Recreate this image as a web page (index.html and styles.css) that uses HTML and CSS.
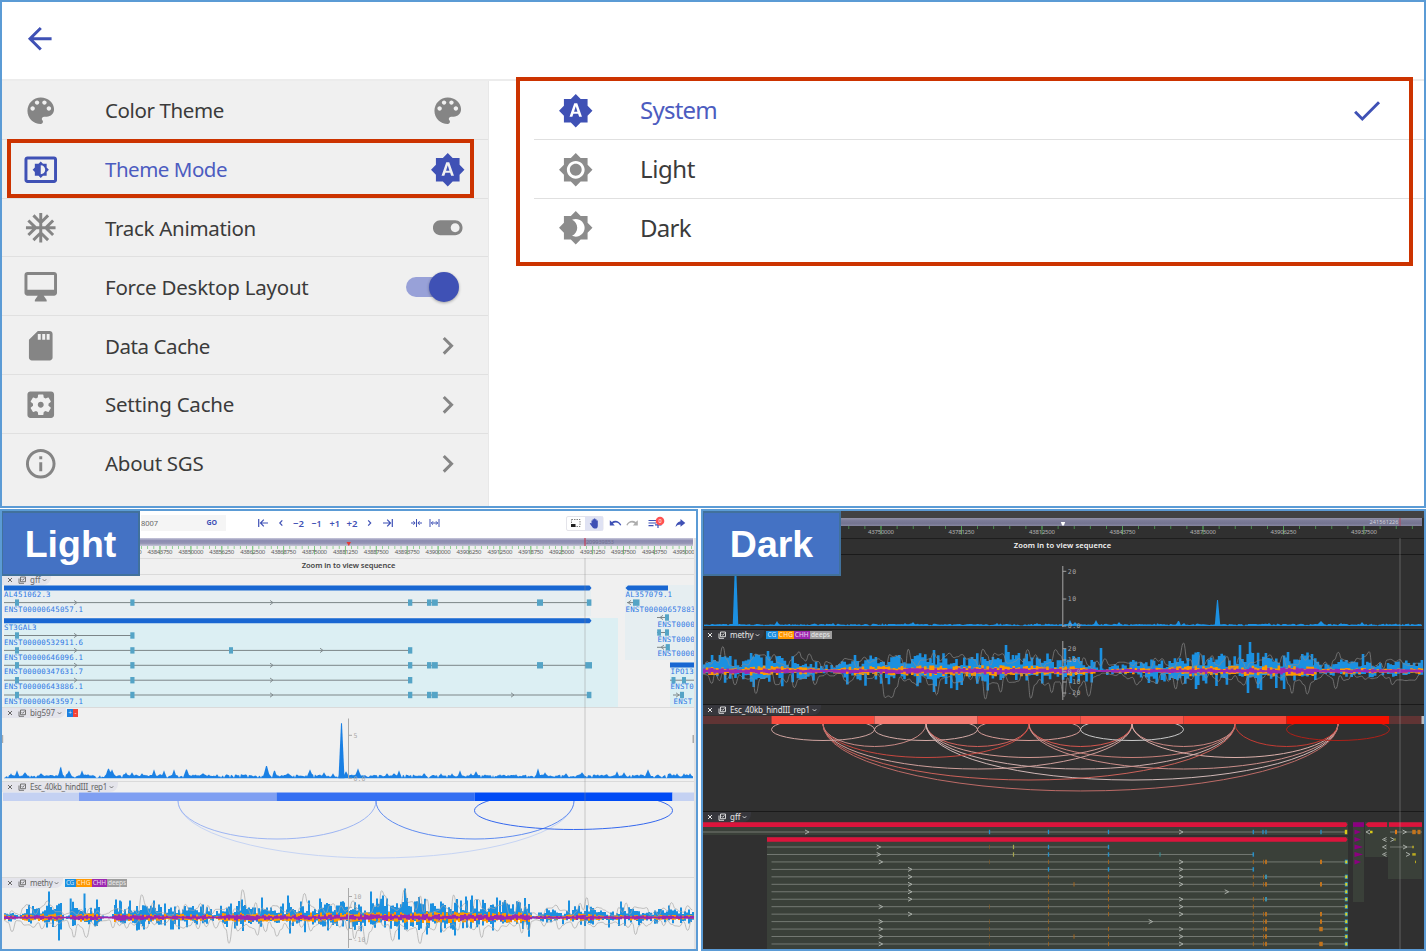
FILE: index.html
```html
<!DOCTYPE html>
<html lang="en">
<head>
<meta charset="utf-8">
<title>SGS theme settings</title>
<link rel="stylesheet" href="styles.css">
</head>
<body>
<svg class="defs" aria-hidden="true">
  <symbol id="i-back" viewBox="0 0 24 24"><path d="M20 11H7.83l5.59-5.59L12 4l-8 8 8 8 1.41-1.41L7.83 13H20v-2z"/></symbol>
  <symbol id="i-palette" viewBox="0 0 24 24"><path d="M12 3c-4.97 0-9 4.03-9 9s4.03 9 9 9c.83 0 1.5-.67 1.5-1.5 0-.39-.15-.74-.39-1.01-.23-.26-.38-.61-.38-.99 0-.83.67-1.5 1.5-1.5H16c2.76 0 5-2.24 5-5 0-4.42-4.03-8-9-8zm-5.500 9c-.83 0-1.500-.67-1.500-1.500S5.670 9 6.500 9 8 9.670 8 10.500 7.330 12 6.500 12zm3-4C8.670 8 8 7.330 8 6.500S8.670 5 9.500 5s1.500.67 1.500 1.500S10.330 8 9.500 8zm5 0c-.83 0-1.500-.67-1.500-1.500S13.670 5 14.500 5s1.500.67 1.500 1.500S15.330 8 14.500 8zm3 4c-.83 0-1.500-.67-1.500-1.500S16.670 9 17.500 9s1.500.67 1.500 1.500-.67 1.500-1.500 1.500z"/></symbol>
  <symbol id="i-mode" viewBox="0 0 24 24"><path d="M21 3H3c-1.100 0-2 .9-2 2v14c0 1.100.9 2 2 2h18c1.100 0 2-.9 2-2V5c0-1.100-.9-2-2-2zm0 16.010H3V4.990h18v14.020zM8 16h2.500l1.500 1.500 1.500-1.500H16v-2.500l1.500-1.500-1.500-1.500V8h-2.500L12 6.500 10.500 8H8v2.500L6.500 12 8 13.500V16zm4-7c1.660 0 3 1.340 3 3s-1.340 3-3 3V9z"/></symbol>
  <symbol id="i-auto" viewBox="0 0 24 24"><path d="M10.850 12.650h2.300L12 9l-1.150 3.650zM20 8.690V4h-4.690L12 .69 8.690 4H4v4.690L.69 12 4 15.310V20h4.690L12 23.310 15.310 20H20v-4.690L23.310 12 20 8.690zM14.300 16l-.7-2h-3.200l-.7 2H7.800L11 7h2l3.200 9h-1.900z"/></symbol>
  <symbol id="i-light" viewBox="0 0 24 24"><path d="M20 8.690V4h-4.690L12 .69 8.690 4H4v4.690L.69 12 4 15.310V20h4.690L12 23.310 15.310 20H20v-4.690L23.310 12 20 8.690zM12 18c-3.310 0-6-2.690-6-6s2.690-6 6-6 6 2.690 6 6-2.690 6-6 6zm0-10c-2.210 0-4 1.790-4 4s1.790 4 4 4 4-1.790 4-4-1.790-4-4-4z"/></symbol>
  <symbol id="i-dark" viewBox="0 0 24 24"><path d="M20 8.690V4h-4.690L12 .69 8.690 4H4v4.690L.69 12 4 15.310V20h4.690L12 23.310 15.310 20H20v-4.690L23.310 12 20 8.690zM12 18c-.89 0-1.740-.2-2.500-.55C11.560 16.500 13 14.420 13 12s-1.440-4.500-3.500-5.450C10.260 6.200 11.110 6 12 6c3.310 0 6 2.690 6 6s-2.690 6-6 6z"/></symbol>
  <symbol id="i-snow" viewBox="0 0 24 24"><path d="M22 11h-4.170l3.240-3.240-1.410-1.420L15 11h-2V9l4.660-4.660-1.420-1.410L13 6.170V2h-2v4.170L7.760 2.930 6.340 4.340 11 9v2H9L4.340 6.340 2.930 7.760 6.170 11H2v2h4.170l-3.240 3.240 1.410 1.420L9 13h2v2l-4.660 4.660 1.420 1.410L11 17.830V22h2v-4.170l3.240 3.240 1.420-1.410L13 15v-2h2l4.660 4.660 1.410-1.420L17.830 13H22z"/></symbol>
  <symbol id="i-toggle" viewBox="0 0 24 24"><path d="M17 7H7c-2.760 0-5 2.240-5 5s2.240 5 5 5h10c2.760 0 5-2.240 5-5s-2.240-5-5-5zm0 8c-1.660 0-3-1.340-3-3s1.340-3 3-3 3 1.340 3 3-1.340 3-3 3z"/></symbol>
  <symbol id="i-desktop" viewBox="0 0 24 24"><path d="M21 2H3c-1.100 0-2 .9-2 2v12c0 1.100.9 2 2 2h7l-2 3v1h8v-1l-2-3h7c1.100 0 2-.9 2-2V4c0-1.100-.9-2-2-2zm0 12H3V4h18v10z"/></symbol>
  <symbol id="i-sd" viewBox="0 0 24 24"><path d="M18 2h-8L4.020 8 4 20c0 1.100.9 2 2 2h12c1.100 0 2-.9 2-2V4c0-1.100-.9-2-2-2zm-6 6h-2V4h2v4zm3 0h-2V4h2v4zm3 0h-2V4h2v4z"/></symbol>
  <symbol id="i-gear" viewBox="0 0 24 24"><path d="M12 10c-1.100 0-2 .9-2 2s.9 2 2 2 2-.9 2-2-.9-2-2-2zm7-7H5c-1.110 0-2 .9-2 2v14c0 1.100.89 2 2 2h14c1.110 0 2-.9 2-2V5c0-1.100-.89-2-2-2zm-1.750 9c0 .23-.02.46-.05.68l1.480 1.160c.13.11.17.3.08.45l-1.400 2.420c-.09.15-.27.21-.43.15l-1.740-.7c-.36.28-.76.51-1.180.69l-.26 1.850c-.03.17-.18.3-.35.3h-2.800c-.17 0-.32-.13-.35-.29l-.26-1.850c-.43-.18-.82-.41-1.180-.69l-1.740.7c-.16.06-.34 0-.43-.15l-1.400-2.420c-.09-.15-.05-.34.08-.45l1.480-1.160c-.03-.23-.05-.46-.05-.69 0-.23.02-.46.05-.68l-1.480-1.160c-.13-.11-.17-.3-.08-.45l1.400-2.420c.09-.15.27-.21.43-.15l1.740.7c.36-.28.76-.51 1.180-.69l.26-1.850c.03-.17.18-.3.35-.3h2.800c.17 0 .32.13.35.29l.26 1.850c.43.18.82.41 1.180.69l1.740-.7c.16-.06.34 0 .43.15l1.400 2.420c.09.15.05.34-.08.45l-1.480 1.160c.03.23.05.46.05.69z"/></symbol>
  <symbol id="i-info" viewBox="0 0 24 24"><path d="M11 7h2v2h-2zm0 4h2v6h-2zm1-9C6.480 2 2 6.480 2 12s4.480 10 10 10 10-4.480 10-10S17.520 2 12 2zm0 18c-4.410 0-8-3.590-8-8s3.590-8 8-8 8 3.590 8 8-3.590 8-8 8z"/></symbol>
  <symbol id="i-next" viewBox="0 0 24 24"><path d="M10 6L8.590 7.410 13.170 12l-4.580 4.590L10 18l6-6z"/></symbol>
  <symbol id="i-check" viewBox="0 0 24 24"><path d="M9 16.170L4.830 12l-1.420 1.410L9 19 21 7l-1.410-1.410z"/></symbol>
  <symbol id="i-close" viewBox="0 0 8 8"><path d="M2 2l4 4M6 2L2 6" fill="none" stroke="currentColor" stroke-width="1"/></symbol>
  <symbol id="i-copy" viewBox="0 0 8 8"><path d="M2.500 1h5v4.700h-5zM1 2.500V7.300h5M3.700 3.300l1 1 1.700-2" fill="none" stroke="currentColor" stroke-width=".9"/></symbol>
  <symbol id="i-caret" viewBox="0 0 5 8"><path d="M.8 3.300L2.500 5l1.700-1.700" fill="none" stroke="currentColor" stroke-width=".9"/></symbol>
</svg>

<main class="page">
  <section class="settings">
    <header class="settings-head"><svg class="icon accent"><use href="#i-back"/></svg></header>
    <div class="settings-body">
      <nav class="menu">
        <div class="row"><svg class="icon"><use href="#i-palette"/></svg><span class="label"><span data-width="119">Color Theme</span></span><svg class="icon"><use href="#i-palette"/></svg></div>
        <div class="row accent"><svg class="icon"><use href="#i-mode"/></svg><span class="label"><span data-width="122">Theme Mode</span></span><svg class="icon"><use href="#i-auto"/></svg></div>
        <div class="row"><svg class="icon"><use href="#i-snow"/></svg><span class="label"><span data-width="151">Track Animation</span></span><svg class="icon"><use href="#i-toggle"/></svg></div>
        <div class="row"><svg class="icon"><use href="#i-desktop"/></svg><span class="label"><span data-width="203.500">Force Desktop Layout</span></span><span class="switch"><span class="knob"></span></span></div>
        <div class="row"><svg class="icon"><use href="#i-sd"/></svg><span class="label"><span data-width="105">Data Cache</span></span><svg class="icon"><use href="#i-next"/></svg></div>
        <div class="row"><svg class="icon"><use href="#i-gear"/></svg><span class="label"><span data-width="129">Setting Cache</span></span><svg class="icon"><use href="#i-next"/></svg></div>
        <div class="row"><svg class="icon"><use href="#i-info"/></svg><span class="label"><span data-width="98.500">About SGS</span></span><svg class="icon"><use href="#i-next"/></svg></div>
      </nav>
      <div class="options">
        <div class="row accent"><svg class="icon"><use href="#i-auto"/></svg><span class="label"><span data-width="77">System</span></span><svg class="icon"><use href="#i-check"/></svg></div>
        <div class="row"><svg class="icon"><use href="#i-light"/></svg><span class="label"><span data-width="55">Light</span></span></div>
        <div class="row"><svg class="icon"><use href="#i-dark"/></svg><span class="label"><span data-width="51">Dark</span></span></div>
      </div>
    </div>
    <div class="callout callout-menu"></div>
    <div class="callout callout-options"></div>
  </section>

  <div class="previews">
    <section class="preview light">
      <div class="toolbar">
        <div class="position"><span>8007</span><b>GO</b></div>
        <svg class="tools" viewBox="226 511 470 27">
          <g class="tool-lines">
            <path d="M258.700 519v8M268 523h-7.500M263.800 519.700l-3.300 3.300 3.300 3.300"/>
            <path d="M282.300 520.300l-2.500 2.700 2.500 2.700M368.200 520.300l2.500 2.700-2.500 2.700"/>
            <path d="M392.300 519v8M383 523h7.500M387.200 519.700l3.300 3.300-3.300 3.300"/>
            <path d="M416.500 519v8M411 523h4M418 523h4M413.400 521.200l1.700 1.800-1.700 1.800M419.600 521.200l-1.700 1.800 1.700 1.800" stroke-width="1"/>
            <path d="M430 519v8M439 519v8M431.300 523h6.400M433 521.300l-1.700 1.700 1.700 1.700M436 521.300l1.700 1.700-1.700 1.700" stroke-width="1"/>
          </g>
          <g class="tool-text">
            <text x="293" y="526.500" textLength="11" lengthAdjust="spacingAndGlyphs">−2</text><text x="311.500" y="526.500" textLength="10" lengthAdjust="spacingAndGlyphs">−1</text>
            <text x="329.500" y="526.500" textLength="10.500" lengthAdjust="spacingAndGlyphs">+1</text><text x="346.500" y="526.500" textLength="11" lengthAdjust="spacingAndGlyphs">+2</text>
          </g>
          <rect x="566.500" y="516.500" width="36.500" height="14" rx="1.500" class="tool-group"/>
          <rect x="585" y="516.500" width="18" height="14" class="tool-active"/>
          <rect x="571.500" y="519.500" width="8.500" height="7" class="dashed"/><rect x="571" y="524" width="4.500" height="3" fill="#222"/>
          <path class="solid" d="M591.500 523.500v-3h1.100v-1.200h1.300v-.8h1.300v.8h1.300v1.200h1.300v5.200c0 2-1 2.800-2.600 2.800-1.800 0-2.400-.6-3.100-1.800l-2.400-3.200.9-.6z"/>
          <path class="solid" d="M609.800 520.200v5.200h5l-1.900-1.900c3-2 6-.8 7.200 2l1.200-.5c-1.700-4-6.200-5.700-9.500-3z"/>
          <path class="muted" d="M637.800 520.200v5.200h-5l1.900-1.900c-3-2-6-.8-7.200 2l-1.200-.5c1.700-4 6.200-5.700 9.500-3z"/>
          <path class="tool-lines" d="M648.500 520.500h7.500M648.500 523h7.500M648.500 525.600h5M658 521.500v6.500M655 524.800h6.500"/>
          <circle cx="660" cy="521" r="4.300" fill="#ff5252"/><text class="badge-text" x="658.400" y="523.200">0</text>
          <path class="solid" d="M680.500 519l4.800 3.900-4.800 3.800v-2.300c-2 0-3.700.7-5 2.600.5-2.800 2-5.200 5-5.700z"/>
        </svg>
      </div>
      <svg class="ruler" id="light-ruler" viewBox="2 538 694 20"></svg>
      <div class="sequence"><span data-width="93.500">Zoom in to view sequence</span></div>
      <article class="track gff">
        <header><span class="tab"><svg class="mini"><use href="#i-close"/></svg><svg class="mini"><use href="#i-copy"/></svg><span>gff</span><svg class="caret"><use href="#i-caret"/></svg></span></header>
        <svg class="plot" id="light-gff" viewBox="2 585 694 122"></svg>
      </article>
      <article class="track big">
        <header><span class="tab"><svg class="mini"><use href="#i-close"/></svg><svg class="mini"><use href="#i-copy"/></svg><span data-width="25">big597</span><svg class="caret"><use href="#i-caret"/></svg></span><span class="chip plus">+</span><span class="chip minus">-</span></header>
        <svg class="plot" id="light-big" viewBox="2 718 694 63"></svg>
      </article>
      <article class="track esc">
        <header><span class="tab"><svg class="mini"><use href="#i-close"/></svg><svg class="mini"><use href="#i-copy"/></svg><span data-width="77">Esc_40kb_hindIII_rep1</span><svg class="caret"><use href="#i-caret"/></svg></span></header>
        <svg class="plot" id="light-esc" viewBox="2 792 694 85"></svg>
      </article>
      <article class="track methy">
        <header><span class="tab"><svg class="mini"><use href="#i-close"/></svg><svg class="mini"><use href="#i-copy"/></svg><span data-width="22.500">methy</span><svg class="caret"><use href="#i-caret"/></svg></span><span class="chip cg"><span data-width="8">CG</span></span><span class="chip chg"><span data-width="14">CHG</span></span><span class="chip chh"><span data-width="13">CHH</span></span><span class="chip deeps"><span data-width="18">deeps</span></span></header>
        <svg class="plot" id="light-methy" viewBox="2 888 694 61"></svg>
      </article>
      <div class="edge"></div>
      <div class="crosshair"></div>
      <div class="badge">Light</div>
    </section>

    <section class="preview dark">
      <div class="strip"></div>
      <svg class="ruler" id="dark-ruler" viewBox="703 518 721 20"></svg>
      <div class="sequence"><span data-width="97.500">Zoom in to view sequence</span></div>
      <article class="track cover"><svg class="plot" id="dark-big" viewBox="703 555 721 74"></svg></article>
      <article class="track methy">
        <header><span class="tab"><svg class="mini"><use href="#i-close"/></svg><svg class="mini"><use href="#i-copy"/></svg><span data-width="23.500">methy</span><svg class="caret"><use href="#i-caret"/></svg></span><span class="chip cg"><span data-width="9">CG</span></span><span class="chip chg"><span data-width="14.500">CHG</span></span><span class="chip chh"><span data-width="14">CHH</span></span><span class="chip deeps"><span data-width="19">deeps</span></span></header>
        <svg class="plot" id="dark-methy" viewBox="703 640 721 64"></svg>
      </article>
      <article class="track esc">
        <header><span class="tab"><svg class="mini"><use href="#i-close"/></svg><svg class="mini"><use href="#i-copy"/></svg><span data-width="80">Esc_40kb_hindIII_rep1</span><svg class="caret"><use href="#i-caret"/></svg></span></header>
        <svg class="plot" id="dark-esc" viewBox="703 715 721 96"></svg>
      </article>
      <article class="track gff">
        <header><span class="tab"><svg class="mini"><use href="#i-close"/></svg><svg class="mini"><use href="#i-copy"/></svg><span>gff</span><svg class="caret"><use href="#i-caret"/></svg></span></header>
        <svg class="plot" id="dark-gff" viewBox="703 822 721 127"></svg>
      </article>
      <div class="crosshair"></div>
      <div class="badge">Dark</div>
    </section>
  </div>
</main>
<script src="script.js"></script>
</body>
</html>
```

FILE: styles.css
```css
* { box-sizing: border-box; }
body { margin: 0; background: #fff; font-family: "Noto Sans", "Open Sans", sans-serif; }
svg { display: block; }
.defs { width: 0; height: 0; position: absolute; }
.page { width: 1427px; height: 952px; display: flex; flex-direction: column; gap: 1px; overflow: hidden; }
[data-width] { display: inline-block; white-space: nowrap; }

/* settings */
.settings { position: relative; width: 1426px; height: 508px; border: 2px solid #5b9bd5; display: flex; flex-direction: column; background: #fff; }
.settings-head { height: 79px; padding: 19px 0 0 20px; border-bottom: 2px solid #ececec; }
.settings-body { flex: 1; display: flex; gap: 45px; }
.icon { width: 35.5px; height: 35.5px; fill: currentColor; flex: none; }
.accent { color: #3f51b5; }
.menu { width: 487px; background: #f0f0f0; border-right: 1.5px solid #e8e8e8; }
.row { height: 58.8px; padding-top: 1.2px; border-bottom: 1.5px solid #e0e0e0; display: flex; align-items: center; color: #858585; }
.row:last-child { border-bottom-color: transparent; }
.menu .row { padding-left: 20.500px; padding-right: 23px; }
.row .label { flex: 1; color: #3b3b3b; font-size: 20.500px; line-height: 30px; }
.menu .label { padding-left: 47px; }
.row.accent { color: #3f51b5; }
.row.accent .label { color: #4c5cc0; }
.options { flex: 1; }
.options .row { padding-left: 23.5px; padding-right: 40px; color: #8c8c8c; }
.options .row.accent { color: #3f51b5; }
.options .label { padding-left: 47px; font-size: 24px; }
.switch { width: 53.5px; height: 20.6px; margin-right: 6px; border-radius: 11px; background: linear-gradient(90deg, #98a1d8 0 47px, transparent 47px); display: flex; align-items: center; justify-content: flex-end; }
.knob { width: 30px; height: 30px; border-radius: 50%; background: #3f51b5; box-shadow: 0 1px 3px #0005; flex: none; }
.callout { position: absolute; border: 4px solid #cc3300; }
.callout-menu { left: 5px; top: 137px; width: 467px; height: 59px; }
.callout-options { left: 514px; top: 75px; width: 897px; height: 189px; }

/* previews */
.previews { display: flex; gap: 3px; height: 442px; }
.preview { position: relative; border: 2px solid #5b9bd5; height: 442px; display: flex; flex-direction: column; overflow: hidden; }
.light { width: 698px; background: #f0f0f0; color: #666; }
.dark { width: 725px; background: #303030; color: #e8e8e8; }
.badge { position: absolute; top: 0; left: -1px; width: 139px; height: 65px; padding-top: 1px; border: 2px solid #41719c; background: #4472c4; color: #fff; font-family: "Liberation Sans", Arial, sans-serif; font-weight: bold; font-size: 37.5px; line-height: 61px; text-align: center; }

.toolbar { height: 27px; background: #fff; display: flex; }
.position { width: 224px; padding: 4px 0 7px 139px; display: flex; justify-content: space-between; align-items: center; background: #f5f5f5; background-clip: content-box; font-size: 7.5px; line-height: 16px; color: #666; }
.position b { color: #3f51b5; font-size: 7px; padding-right: 9px; }
.tools { width: 470px; height: 27px; }
.tool-lines { fill: none; stroke: #3f51b5; stroke-width: 1.2; }
.tool-text { fill: #3f51b5; font: 600 9.5px "Noto Sans", sans-serif; }
.tool-group { fill: #fff; stroke: #e4e4ea; }
.tool-active { fill: #dfe2f3; }
.dashed { fill: none; stroke: #666; stroke-width: .8; stroke-dasharray: 1.5 1; }
.solid { fill: #3f51b5; }
.muted { fill: #adadad; }
.badge-text { fill: #fff; font: 5.5px "Noto Sans", sans-serif; }

.ruler { height: 20px; flex: none; }
.sequence { height: 16px; display: flex; justify-content: center; align-items: center; padding-bottom: 2px; font-weight: 600; font-size: 7.5px; line-height: 13px; border-top: 1px solid #dcdcdc; color: #444; }
.light .sequence { padding-right: 1px; }
.dark .sequence { border-top-color: #1e1e1e; color: #f4f4f4; padding-right: 2px; }
.track { border-top: 1px solid #dadada; display: flex; flex-direction: column; }
.dark .track { border-top: 1px solid #1a1a1a; }
.track header { height: 10px; display: flex; align-items: center; font-size: 8px; line-height: 10px; }
.tab { height: 10px; padding: 0 4px; display: flex; align-items: center; background: #e4e4eb; border-radius: 0 0 8px 0; margin-right: 1.5px; }
.dark .tab { background: #37373d; padding-left: 3px; }
.dark .methy .tab { margin-right: 2px; }
.mini { width: 8px; height: 8px; margin-right: 4px; }
.caret { width: 5px; height: 8px; margin-left: 1.5px; }
.chip { height: 8.5px; display: flex; align-items: center; justify-content: center; color: #ffffffcc; font-size: 6.5px; line-height: 8px; }
.plus { width: 6px; background: #1e7fe0; }
.minus { width: 5px; background: #f44336; }
.cg { width: 11px; background: #1b8fe0; }
.chg { width: 16px; background: #ff9800; }
.chh { width: 15.5px; background: #9c27b0; }
.deeps { width: 20px; background: #9e9e9e; }
.dark .cg { width: 12px; }
.dark .deeps { width: 22px; }
.plot { flex: 1; width: 100%; min-height: 0; }
.light .gff { height: 133px; }
.light .big { height: 74px; }
.light .esc { height: 96px; }
.light .methy { height: 72px; }
.dark .strip { height: 7px; background: #424242; }
.dark .cover { height: 75px; }
.dark .methy { height: 75px; }
.dark .esc { height: 107px; }
.dark .gff { height: 138px; }
.edge { position: absolute; right: 0; top: 27px; bottom: 0; width: 2px; background: #e0e0e2; }
.crosshair { position: absolute; bottom: 0; width: 2px; background: #8883; }
.light .crosshair { left: 582px; top: 47px; }
.dark .crosshair { left: 696px; top: 27px; width: 1.5px; background: #aaa3; }
```

FILE: script.js
```js
const NS = "http://www.w3.org/2000/svg";

function add(parent, tag, attrs, text) {
  const node = document.createElementNS(NS, tag);
  for (const key in attrs) node.setAttribute(key, attrs[key]);
  if (text !== undefined) node.textContent = text;
  parent.appendChild(node);
  return node;
}
const byId = (id) => document.getElementById(id);
const rect = (p, x, y, w, h, fill, extra) => add(p, "rect", { x, y, width: w, height: h, fill, ...extra });
const path = (p, d, attrs) => add(p, "path", { d, fill: "none", ...attrs });

function random(seed) {
  let s = seed;
  return () => ((s = (s * 1664525 + 1013904223) % 4294967296) / 4294967296);
}

document.querySelectorAll("[data-width]").forEach((el) => {
  const gap = (parseFloat(el.dataset.width) - el.getBoundingClientRect().width) / el.textContent.length;
  el.style.letterSpacing = gap.toFixed(3) + "px";
});

/* Rulers */
function ruler(svg, o) {
  const defs = add(svg, "defs", {});
  const g = add(defs, "linearGradient", { id: o.id, x1: 0, y1: 0, x2: 0, y2: 1 });
  o.stops.forEach((c, i) => add(g, "stop", { offset: i / (o.stops.length - 1), "stop-color": c }));
  rect(svg, o.x0, o.top, o.x1 - o.x0, 8, `url(#${o.id})`);
  for (let x = o.start - o.step; x < o.x1; x += o.step / 5)
    rect(svg, x - 0.4, o.top + 8, 0.8, 3, o.tick);
  for (let i = o.first; o.start + i * o.step < o.x1; i++) {
    const x = o.start + i * o.step;
    rect(svg, x - 0.5, o.top + 8, 1, 8.5, o.tick);
    add(svg, "text", { x: x - o.width / 2, y: o.top + o.textY, textLength: o.width, "font-size": 6, fill: o.color }, o.value + i * o.inc);
  }
}
ruler(byId("light-ruler"), { id: "barL", stops: ["#c9c9dc", "#8b8bb0", "#9595b5", "#c8c8d8"], tick: "#7cc880", first: -1, x0: 3, x1: 693, top: 538, start: 160, step: 30.9, width: 25, textY: 16, value: 43843750, inc: 6250, color: "#5c5c5c" });
path(byId("light-ruler"), "M346.500 542h4.500l-2.200 4z", { fill: "#e53935" });
rect(byId("light-ruler"), 584.5, 538, 1, 8, "#c62842");
add(byId("light-ruler"), "text", { x: 586, y: 543.8, "font-size": 5.5, fill: "#6f6f91", textLength: 28 }, "209939853");
ruler(byId("dark-ruler"), { id: "barD", stops: ["#9292a6", "#7b7b98", "#747490", "#8686a0"], tick: "#4f9a53", first: 0, x0: 703, x1: 1422, top: 518, start: 881, step: 80.5, width: 26, textY: 16.3, value: 43750000, inc: 31250, color: "#b4b4b4" });
path(byId("dark-ruler"), "M1060.800 522h4.400l-1.300 3.500h-1.800z", { fill: "#fff" });
rect(byId("dark-ruler"), 1399.5, 518, 1, 8, "#b04860");
add(byId("dark-ruler"), "text", { x: 1369.5, y: 523.6, "font-size": 5.5, fill: "#d2d2dc", textLength: 29 }, "241561226");

/* Light gene models */
(function () {
  const s = byId("light-gff");
  const blue = "#1967d2", exonFill = "#55a4c6";
  rect(s, 4, 585, 587, 31, "#e6eef1");
  rect(s, 4, 618, 614, 89, "#dceff3");
  rect(s, 625, 585, 69, 75, "#e6eef1");
  rect(s, 670, 662, 24, 45, "#dceff3");
  path(s, "M4 585.500H589.500l2 2.500-2 2.500H4z", { fill: blue });
  path(s, "M4 618.200H589.500l2 2.500-2 2.500H4z", { fill: blue });
  path(s, "M668 585.500H628l-2.500 2.500 2.500 2.500H668z", { fill: blue });
  rect(s, 670, 662.5, 24, 5, blue);
  const std = [[15, 4], [130.3, 4.2], [408, 4.3], [427, 4.3], [431.8, 6], [537, 6], [586.8, 4.6]];
  const rows = [
    [602.6, 4, 591, std, [75, 271]],
    [635.5, 4, 134, std.slice(0, 2), [75]],
    [650.4, 4, 412, [...std.slice(0, 2), [229, 4], std[2]], [75, 321]],
    [665.3, 4, 592, [...std.slice(0, 6), [585.2, 6.8]], [75, 271]],
    [680.2, 4, 412, std.slice(0, 3), [75, 271]],
    [695, 4, 591, [...std.slice(0, 5), std[6]], [271, 512]],
    [602.6, 627, 635, [[633, 6.5]], [-628]],
    [617.5, 657, 666, [[665, 4]], [-660]],
    [632.5, 657, 669, [[657.2, 3.8], [665, 4]], []],
    [647.3, 657, 667, [[665.7, 4.2]], [-661]],
    [680.2, 670, 694, [[671.5, 4], [682, 4]], []],
    [695, 673, 681, [[680, 4]], [677]],
  ];
  rows.forEach(([y, a, b, exons, arrows]) => {
    rect(s, a, y - 0.5, b - a, 1, "#7c8588");
    exons.forEach(([x, w]) => rect(s, x, y - 3.2, w, 6.4, exonFill));
    arrows.forEach((v) => {
      const x = Math.abs(v), d = v < 0 ? 2 : -2;
      const tip = v < 0 ? x : x + 2;
      path(s, `M${tip + d * 1.5} ${y - 2.2}L${tip} ${y}L${tip + d * 1.5} ${y + 2.2}`, { stroke: "#7c8588", "stroke-width": 0.9 });
    });
  });
  const names = [
    [4, 594.6, "AL451062.3"], [4, 609.4, "ENST00000645057.1"], [4, 627.6, "ST3GAL3"],
    [4, 642.5, "ENST00000532911.6"], [4, 657.3, "ENST00000646096.1"], [4, 672.1, "ENST00000347631.7"],
    [4, 687, "ENST00000643886.1"], [4, 701.7, "ENST00000643597.1"], [625.5, 594.6, "AL357079.1"],
    [625.5, 609.4, "ENST00000657883"], [657.5, 624.3, "ENST0000"], [657.5, 639.3, "ENST0000"],
    [657.5, 654, "ENST0000"], [670.5, 672.1, "IPO13"], [670.5, 687, "ENST0"], [673.5, 701.7, "ENST"],
  ];
  names.forEach(([x, y, t]) => add(s, "text", { x, y: y + 2.3, "font-size": 7.4, "font-family": "DejaVu Sans Mono, monospace", fill: "#2f78e4", textLength: t.length * 4.65 }, t));
})();

/* Coverage area plots */
function area(svg, x0, x1, base, peaks, fill, small, seed) {
  const r = random(seed);
  const h = [];
  let level = 1;
  for (let x = x0; x <= x1; x++) {
    level = level * 0.55 + 0.45 * r() * small;
    h.push(r() < 0.88 ? 0.7 + level : 0.6);
  }
  peaks.forEach(([px, ph, w = 2.2]) => {
    for (let x = Math.ceil(px - w); x <= px + w; x++) {
      const i = x - x0;
      if (i >= 0 && i < h.length && ph < 20) h[i] = Math.max(h[i], ph * (1 - Math.abs(x - px) / (w + 0.8)));
    }
  });
  path(svg, `M${x0} ${base}` + h.map((v, i) => `L${x0 + i} ${(base - v).toFixed(1)}`).join("") + `V${base}z`, { fill });
  peaks.filter((p) => p[1] >= 20).forEach(([px, ph, w = 2.2]) =>
    path(svg, `M${px - w} ${base}L${px - 0.5} ${base - ph}h1L${px + w} ${base}z`, { fill }));
}
function axis(svg, x, y0, y1, ticks, color, width) {
  rect(svg, x - 0.5, y0, 1, y1 - y0, color);
  ticks.forEach(([y, t]) => {
    rect(svg, x, y - 0.5, 3.5, 1, color);
    add(svg, "text", { x: x + 5, y: y + 2.4, "font-size": 6.5, "font-family": "DejaVu Sans Mono, monospace", fill: color, textLength: t.length * width }, t);
  });
}
area(byId("light-big"), 4, 693, 778.3, [[11, 5], [17, 8], [25, 6, 4], [41, 5, 4], [60.7, 13], [69, 8, 3], [82, 8], [88, 4, 4], [108.5, 11, 3], [112, 9, 3], [126, 6], [132, 6, 3], [142, 5, 3], [154, 9], [164, 8], [174, 9], [186.5, 10, 3], [203, 5, 6], [217, 4], [266.5, 14, 3], [274.5, 9], [288, 5, 6], [310, 9, 3], [324, 6, 3], [333, 5], [341.5, 55, 3], [346, 7, 3], [358, 10, 3], [387, 5, 3], [394, 5, 4], [399, 8], [424, 5, 3], [441, 5], [452, 5], [460, 8], [471, 5], [476, 7, 3], [500, 4], [516, 4], [538, 10], [545, 6, 3], [566, 5, 3], [582, 6, 4], [607, 4, 3], [617, 7], [624, 6, 3], [648, 9, 3], [670, 5], [677, 5], [684, 5], [690, 5]], "#1a80e4", 4.2, 7);
axis(byId("light-big"), 348.5, 718.5, 778, [[735.3, "5"], [778.3, "0.0"]], "#aaa", 4);
rect(byId("light-big"), 692.5, 735, 3.5, 8, "#aaa");
rect(byId("light-big"), 2, 735, 1.2, 8, "#aaa");
area(byId("dark-big"), 704, 1422, 626, [[735.5, 64, 2.8], [777, 5], [833, 3], [913, 4], [905, 3], [1070, 6], [1075, 4], [1096, 6], [1119, 4], [1178.5, 6], [1184, 3], [1217.5, 26, 2.8], [1321, 5, 4], [1341, 3], [1362, 4], [997, 3], [1037, 3], [1269, 3]], "#1c90e2", 2, 21);
axis(byId("dark-big"), 1062.8, 566, 627, [[571.3, "20"], [599, "10"], [626, "0.0"]], "#a5a5a5", 4.2);

/* Contact arcs: a span of one bin shows as a closed loop cut by the bar. */
function arcs(svg, o) {
  const id = svg.id + "-clip";
  const clip = add(add(svg, "defs", {}), "clipPath", { id });
  rect(clip, 700 * o.side, o.base, 760, 120, "#000");
  o.bars.forEach(([a, b, c]) => rect(svg, a, o.base - o.bar, b - a, o.bar, c));
  const g = add(svg, "g", { "clip-path": `url(#${id})`, fill: "none", "stroke-width": 1 });
  o.arcs.forEach(([a, b, depth, c]) => path(g, `M${a} ${o.base}A${(b - a) / 2} ${depth} 0 0 0 ${b} ${o.base}`, { stroke: c }));
  o.loops.forEach(([cx, c]) => add(g, "ellipse", { cx, cy: o.base + o.loopY, rx: o.rx, ry: o.ry, stroke: c }));
}
arcs(byId("light-esc"), {
  side: 0, base: 801, bar: 8.5,
  bars: [[3, 79, "#c4d1f2"], [79, 276.5, "#7f9ff2"], [276.5, 474.5, "#346ff2"], [474.5, 672.5, "#004bf5"], [672.5, 694, "#c4d1f2"]],
  arcs: [[178, 574, 57, "#c6d4f4"], [178, 376, 38, "#9db5f3"], [376, 574, 38, "#5f8cf0"]],
  loops: [[573.5, "#3468ee"]], loopY: 9.5, rx: 99, ry: 19,
});
const c = [823, 926, 1029, 1132, 1235, 1338];
const depth = [0, 22.5, 33.5, 45, 56, 67];
const tone = { "01": "#c98a86", "02": "#c84840", "03": "#cfa09c", "04": "#cc625a", "05": "#bd6b67", "12": "#d0605a", "13": "#d39993", "14": "#d0aeac", "15": "#d0b8b7", "23": "#d7564e", "24": "#c9807a", "25": "#cc8f8b", "34": "#c98580", "35": "#ddb1ac", "45": "#c43c34" };
arcs(byId("dark-esc"), {
  side: 1, base: 724, bar: 8,
  bars: [[703, 771.5, "#603434"], [771.5, 874.5, "#f84b3e"], [874.5, 977.5, "#f67b71"], [977.5, 1080.5, "#f94a3e"], [1080.5, 1183.5, "#f8584d"], [1183.5, 1286.5, "#f54436"], [1286.5, 1389.5, "#f61000"], [1389.5, 1422, "#603434"]],
  arcs: Object.entries(tone).map(([k, col]) => [c[k[0]], c[k[1]], depth[k[1] - k[0]], col]),
  loops: [[823, "#d0a4a0"], [926, "#d4aaa6"], [1029, "#d89d98"], [1132, "#c9c9c9"], [1338, "#ae2018"]], loopY: 5.5, rx: 51.5, ry: 11,
});
rect(byId("dark-esc"), 1421.5, 716, 2.5, 8, "#bbb");

/* Methylation */
function methylation(svg, o) {
  const r = random(o.seed);
  const env = (x) => {
    for (let i = 1; i < o.env.length; i++)
      if (x <= o.env[i][0]) {
        const [a, va] = o.env[i - 1], [b, vb] = o.env[i];
        return va + ((vb - va) * (x - a)) / (b - a);
      }
    return o.env[o.env.length - 1][1];
  };
  const bars = { a: "", b: "", c: "" };
  const bar = (k, x, up, dn) => (bars[k] += `M${x.toFixed(1)} ${(o.mid - up).toFixed(1)}h${o.w}V${(o.mid + dn).toFixed(1)}h-${o.w}z`);
  for (let x = o.x0; x < o.x1; x += o.w) {
    const e = env(x);
    bar("a", x, e * (0.25 + r() * 0.9), e * o.down * (0.1 + r() * r() * 1.5));
    bar("b", x, e * 0.1 + e * 0.24 * r(), e * 0.08 + e * 0.24 * r());
    bar("c", x, 0.7 + e * 0.16 * r(), 0.7 + e * 0.16 * r());
  }
  o.spikes.forEach(([x, h]) => bar("a", x - o.w / 2, Math.max(h, 0), Math.max(-h, 0)));
  path(svg, bars.a, { fill: "#1b90e0" });
  path(svg, bars.b, { fill: "#ff9800" });
  path(svg, bars.c, { fill: "#9c27b0" });
  [-1, 1].forEach((dir) => {
    let px = o.x0, py = o.mid + dir * 3;
    let d = `M${px} ${py}`;
    for (let x = o.x0 + 4; x < o.x1; x += 3 + r() * 2) {
      const reach = dir < 0 ? 0.85 : 0.7;
      const y = o.mid + dir * Math.min(28, 2 + (env(x) + 2) * (r() * reach + (r() < 0.1 ? 0.8 : 0)));
      const m = (px + x) / 2;
      d += `C${m.toFixed(1)} ${py.toFixed(1)} ${m.toFixed(1)} ${y.toFixed(1)} ${x.toFixed(1)} ${y.toFixed(1)}`;
      px = x; py = y;
    }
    path(svg, d, { stroke: o.line, "stroke-width": 0.7 });
  });
}
methylation(byId("light-methy"), {
  seed: 5, x0: 4, x1: 693, mid: 917.5, w: 2, down: 0.7, line: "#a6a6a6",
  env: [[4, 9], [14, 6], [18, 2], [24, 11], [60, 13], [63, 1], [69, 2], [71, 14], [97, 12], [101, 2], [111, 1], [114, 17], [140, 12], [180, 11], [205, 13], [214, 3], [222, 15], [250, 14], [278, 12], [310, 15], [345, 15], [400, 18], [440, 18], [480, 17], [528, 18], [531, 1.5], [538, 5], [545, 8], [560, 6], [585, 14], [605, 5], [625, 10], [650, 7], [680, 9], [693, 6]],
  spikes: [[49, 26], [59, -23], [70.7, 19], [84.5, 24], [97, 18], [116, 18], [120, 17], [130, 17], [154, 17], [144, -12], [165, 14], [242, 18], [262, 20], [288, 22], [320, 19], [290, -16], [344, 15], [371, 26], [383, 22], [387, 19], [405, 29], [399, -22], [427, -17], [455, -18], [466, 21], [472, 22], [500, 17], [520, 15], [569, 17], [609, -10], [621, 16], [669, 12], [328, -13]],
});
axis(byId("light-methy"), 348.5, 888, 948, [[896.5, "10"], [907.3, "5"], [928.5, "-5"], [939.4, "-10"]], "#aaa", 4);
methylation(byId("dark-methy"), {
  seed: 15, x0: 703, x1: 1421, mid: 671, w: 2.6, down: 0.85, line: "#8a8a8a",
  env: [[703, 14], [732, 14], [738, 6], [746, 16], [775, 15], [800, 12], [830, 6], [850, 14], [890, 15], [930, 17], [1000, 17], [1060, 15], [1090, 14], [1096, 3], [1130, 10], [1165, 11], [1190, 17], [1220, 15], [1250, 17], [1312, 17], [1318, 6], [1350, 12], [1380, 7], [1400, 9], [1421, 10]],
  spikes: [[768, 20], [855, 16], [934, 21], [934, -21], [957, -19], [1006, 26], [1013, 16], [1101, 23], [1196, -18], [1240, 26], [1250, 29], [1248, -22], [1261, -19], [1363, 17], [1288, 19], [1312, 17], [1065, 22], [915, 15]],
});
axis(byId("dark-methy"), 1062.8, 641, 700, [[648.7, "20"], [660, "10"], [671.3, "0.0"], [682, "-10"], [693, "-20"]], "#a5a5a5", 4.2);

/* Dark gene models */
(function () {
  const s = byId("dark-gff");
  const red = "#dc143c", bg = "#3a4039";
  rect(s, 703, 822, 645, 13, bg);
  rect(s, 767, 837, 581, 112, bg);
  rect(s, 1353, 822, 11, 80, bg);
  rect(s, 1365, 822, 23, 35, bg);
  rect(s, 1388, 822, 34, 57, bg);
  path(s, "M703 822.300H1346l1.500 2.300-1.500 2.300H703z", { fill: red });
  path(s, "M767 837.200H1346l1.500 2.300-1.500 2.300H767z", { fill: red });
  path(s, "M1387 822.300H1368l-2.500 2.300 2.500 2.300H1387z", { fill: red });
  rect(s, 1389, 822.3, 33, 4.6, red);
  rect(s, 1353, 822.3, 11, 4.6, "#8b0080");
  const chevron = (x, y, dir) => path(s, `M${x - 2 * dir} ${y - 2}L${x + 2 * dir} ${y}L${x - 2 * dir} ${y + 2}`, { stroke: "#a9aea8", "stroke-width": 1 });
  const mark = (x, y, w, col, h = 4.4) => rect(s, x - w / 2, y - h / 2, w, h, col);
  const firsts = [878.7, 878.7, 880.7, 910, 910, 910, 910, 910, 880.7, 910, 880.7, 880.7, 880.7, 880.7];
  const seconds = [0, 0, 1181, 1181, 1181, 1181, 1226.7, 1181, 1181, 1181, 1150.7, 1181, 1181, 1181];
  rect(s, 703, 831.5, 643, 1, "#747973");
  chevron(807, 832, 1); chevron(1181, 832, 1);
  [989.5, 1048.5, 1108.5, 1253.3, 1263, 1266, 1321].forEach((x) => mark(x, 832, 1.3, "#2590c8"));
  mark(1346, 832, 2.4, "#d9c91a");
  firsts.forEach((f, i) => {
    const y = 847 + i * 7.46;
    const end = i === 0 ? 1108.5 : i === 1 || i === 3 ? 1253.3 : 1346;
    rect(s, i < 2 ? 767 : 771.5, y - 0.5, end - (i < 2 ? 767 : 771.5), 1, "#747973");
    chevron(f, y, 1);
    if (seconds[i]) chevron(seconds[i], y, 1);
    if ([0, 2, 8, 10, 11, 12, 13].includes(i)) mark(989.5, y, 0.6, "#8a5a22");
    if (i < 2) mark(1013.5, y, 1.2, "#a8a850");
    const blue = i < 2 || i === 3;
    mark(1048.5, y, blue ? 1.3 : 0.7, blue ? "#2590c8" : "#a5651c");
    if (i !== 10) mark(1108.5, y, blue ? 1.4 : 0.9, blue ? "#2590c8" : "#a5651c");
    if (i === 1) mark(1160, y, 1.1, "#3b8d93");
    if (i === 5 || i === 12) mark(1074, y, 1, "#a5651c");
    if (i === 1 || i === 3) mark(1253.3, y, 1.5, "#2590c8");
    if (i > 3 && i !== 6 || i === 2) {
      mark(1253.3, y, 0.9, "#a5651c");
      if (i !== 8) { mark(1263.5, y, 0.9, "#a5651c"); mark(1266, y, 1.7, i === 4 || i === 7 ? "#3d9bbb" : "#c4741c"); }
    }
    if ([2, 5, 9, 10, 11, 13].includes(i)) mark(1321, y, i === 11 || i === 13 ? 3.5 : 2, "#c4741c");
    if (end === 1346) { mark(1346.3, y, 3, "#2590c8"); mark(1346.3, y, 2, "#e0d21c", 2.8); }
  });
  [832, 839.5, 847, 854.4, 861.9].forEach((y, i) => {
    const w = i === 2 || i === 3 ? 8.5 : 6.5;
    path(s, `M1354.500 ${y - 2.5}l${w} 2.500l-${w} 2.500z`, { fill: "#8b0080" });
  });
  rect(s, 1390, 831.5, 32, 1, "#747973");
  chevron(1368, 832, -1); mark(1371.3, 832, 2.5, "#d9c91a", 2.5);
  [839.5, 847, 854.4].forEach((y) => { chevron(1384.5, y, -1); rect(s, 1383, y - 0.4, 4, 0.8, "#747973"); });
  mark(1396, 832, 2, "#e07a18"); chevron(1404.5, 832, 1);
  mark(1414, 832, 3.5, "#c4741c"); mark(1419, 832, 3, "#c4741c");
  chevron(1392.5, 839.5, 1); mark(1395, 839.5, 1.5, "#8a8a38", 2.5);
  rect(s, 1390, 846.5, 24, 1, "#747973"); chevron(1405, 847, 1); mark(1413, 847, 1.5, "#b8a820", 2.5);
  chevron(1408, 854.4, 1); mark(1414, 854.4, 3.5, "#b8a820", 2.5);
  mark(1415.5, 861.9, 1, "#b8a820", 2.5);
})();
```
